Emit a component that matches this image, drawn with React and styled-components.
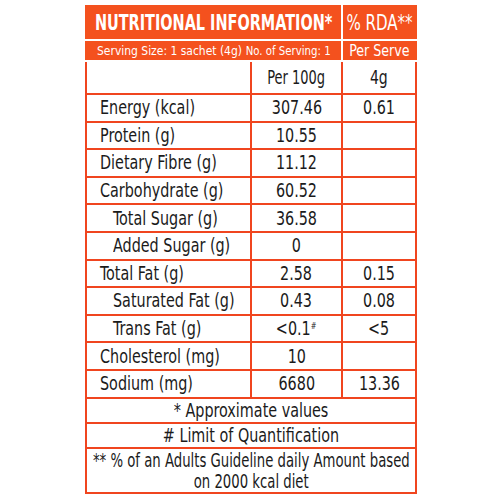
import React from "react";
import styled, { createGlobalStyle } from "styled-components";

const ORANGE = "#f4511e";
const LINE = "#f0451f";

const rows = [
  { name: "Energy (kcal)", per100: "307.46", serve: "0.61" },
  { name: "Protein (g)", per100: "10.55" },
  { name: "Dietary Fibre (g)", per100: "11.12" },
  { name: "Carbohydrate (g)", per100: "60.52" },
  { name: "Total Sugar (g)", per100: "36.58", sub: true },
  { name: "Added Sugar (g)", per100: "0", sub: true },
  { name: "Total Fat (g)", per100: "2.58", serve: "0.15" },
  { name: "Saturated Fat (g)", per100: "0.43", serve: "0.08", sub: true },
  { name: "Trans Fat (g)", per100: "<0.1", mark: "#", serve: "<5", sub: true },
  { name: "Cholesterol (mg)", per100: "10" },
  { name: "Sodium (mg)", per100: "6680", serve: "13.36" },
];

const notes = [
  { lines: ["* Approximate values"], x: 0.84 },
  { lines: ["# Limit of Quantification"], x: 0.84 },
  {
    lines: ["** % of an Adults Guideline daily Amount based", "on 2000 kcal diet"],
    x: 0.775,
  },
];

function App() {
  return (
    <>
      <GlobalStyle />
      <Page>
        <Table>
          <colgroup>
            <col style={{ width: 165 }} />
            <col style={{ width: 91 }} />
            <col style={{ width: 74 }} />
          </colgroup>
          <thead>
            <tr>
              <HeadCell colSpan={2} $big>
                <Centered>
                  <Squeeze $x={0.73} $bold>NUTRITIONAL INFORMATION*</Squeeze>
                </Centered>
              </HeadCell>
              <HeadCell $big>
                <Centered>
                  <Squeeze $x={0.76}>% RDA**</Squeeze>
                </Centered>
              </HeadCell>
            </tr>
            <tr>
              <HeadCell colSpan={2}>
                <ServingLine>
                  <Squeeze $x={0.92} $origin="left">
                    Serving Size: 1 sachet (4g)
                  </Squeeze>
                  <Squeeze $x={0.87} $origin="right">
                    No. of Serving: 1
                  </Squeeze>
                </ServingLine>
              </HeadCell>
              <HeadCell $mid>
                <Centered>
                  <Squeeze $x={0.88}>Per Serve</Squeeze>
                </Centered>
              </HeadCell>
            </tr>
          </thead>
          <tbody>
            <UnitRow>
              <Cell />
              <ValueCell>
                <Squeeze $x={0.76}>Per 100g</Squeeze>
              </ValueCell>
              <ValueCell>
                <Squeeze $x={0.82}>4g</Squeeze>
              </ValueCell>
            </UnitRow>
            {rows.map((r) => (
              <Row key={r.name}>
                <NameCell $sub={r.sub}>
                  <Squeeze $x={0.84} $origin="left">
                    {r.name}
                  </Squeeze>
                </NameCell>
                <ValueCell>
                  <Squeeze $x={0.84}>
                    {r.per100}
                    {r.mark && <Mark>{r.mark}</Mark>}
                  </Squeeze>
                </ValueCell>
                <ValueCell>
                  {r.serve && <Squeeze $x={0.84}>{r.serve}</Squeeze>}
                </ValueCell>
              </Row>
            ))}
            {notes.map((n) => (
              <NoteRow key={n.lines[0]}>
                <NoteCell colSpan={3}>
                  {n.lines.map((l) => (
                    <Centered key={l}>
                      <Squeeze $x={n.x}>{l}</Squeeze>
                    </Centered>
                  ))}
                </NoteCell>
              </NoteRow>
            ))}
          </tbody>
        </Table>
      </Page>
    </>
  );
}

export default App;

const GlobalStyle = createGlobalStyle`
  html, body {
    margin: 0;
    background: #ffffff;
  }
  body {
    font-family: "DejaVu Sans Condensed", "DejaVu Sans", "Liberation Sans", sans-serif;
    font-stretch: condensed;
  }
`;

const Page = styled.div`
  width: 500px;
  height: 500px;
  padding: 5px 0 0 85px;
  box-sizing: border-box;
`;

const Table = styled.table`
  width: 330px;
  table-layout: fixed;
  border-collapse: collapse;
  color: #1b1b1b;
`;

const Squeeze = styled.span`
  display: inline-block;
  white-space: nowrap;
  transform: scaleX(${(p) => p.$x});
  transform-origin: ${(p) => p.$origin || "center"};
  font-weight: ${(p) => (p.$bold ? 700 : 400)};
`;

const Centered = styled.div`
  display: flex;
  justify-content: center;
`;

const HeadCell = styled.th`
  background: ${ORANGE};
  color: #ffffff;
  border: 2px solid #ffffff;
  border-top-color: ${ORANGE};
  padding: 0;
  height: ${(p) => (p.$big ? "32px" : "19px")};
  font-size: ${(p) => (p.$big ? "22px" : p.$mid ? "16px" : "13px")};
  font-weight: 400;
  line-height: 1;
  overflow: hidden;
  tr > &:first-child {
    border-left-color: ${ORANGE};
  }
  &:last-child {
    border-right-color: ${ORANGE};
  }
`;

const ServingLine = styled.div`
  display: grid;
  grid-template-columns: minmax(0, 1fr) minmax(0, 1fr);
  padding: 0 10px 0 10px;

  & > :first-child {
    justify-self: start;
  }
  & > :last-child {
    justify-self: end;
  }
`;

const Row = styled.tr`
  height: 27.6px;
`;

const UnitRow = styled.tr`
  height: 33px;
`;

const NoteRow = styled.tr`
  height: 25px;
`;

const Cell = styled.td`
  border: 2px solid ${LINE};
  padding: 0;
  font-size: 19px;
  line-height: 1;
`;

const NameCell = styled(Cell)`
  padding-left: ${(p) => (p.$sub ? "26px" : "13px")};
  white-space: nowrap;
`;

const ValueCell = styled(Cell)`
  text-align: center;
`;

const Mark = styled.sup`
  font-size: 9px;
  vertical-align: 6px;
`;

const NoteCell = styled(Cell)`
  padding: 1px 4px 0;
  line-height: 21px;
`;
